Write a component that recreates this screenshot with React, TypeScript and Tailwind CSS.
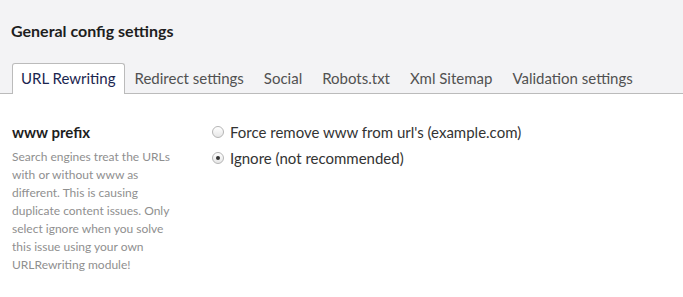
const tabs = [
  "URL Rewriting",
  "Redirect settings",
  "Social",
  "Robots.txt",
  "Xml Sitemap",
  "Validation settings",
];

export default function App() {
  return (
    <div className="min-h-[297px] w-full bg-white font-['Lato',sans-serif]">
      {/* Header with title and tabs */}
      <div className="bg-[#f3f3f5] pt-[20px] border-b border-[#bbbbbb]">
        <h1 className="pl-[11px] text-[16px] font-bold leading-[22px] text-[#1e1e1e]">
          General config settings
        </h1>
        <div className="mt-[21px] flex pl-[12px]">
          {tabs.map((t, i) => (
            <div
              key={t}
              className={
                i === 0
                  ? "-mb-px h-[31px] rounded-t-[3px] border border-b-0 border-[#bbbbbb] bg-white px-[8px] pt-[3px] text-[15px] leading-[22px] text-[#1b264f]"
                  : "h-[30px] border border-transparent px-[9px] pt-[3px] text-[15px] leading-[22px] text-[#515151]"
              }
            >
              {t}
            </div>
          ))}
        </div>
      </div>

      {/* Setting row */}
      <div className="flex pt-[27px]">
        <div className="w-[212px] shrink-0 pl-[12px]">
          <div className="text-[15px] font-bold leading-[22px] text-[#1e1e1e]">www prefix</div>
          <p className="mt-[5px] w-[172px] text-[12px] leading-[18px] text-[#8f8f8f]">
            Search engines treat the URLs with or without www as different. This is causing
            duplicate content issues. Only select ignore when you solve this issue using your own
            URLRewriting module!
          </p>
        </div>
        <div className="flex flex-col gap-[4px] pt-0">
          <label className="flex items-center gap-[6px] text-[15px] leading-[22px] text-[#333333]">
            <span className="h-[12px] w-[12px] rounded-full border border-[#b5b5b5] bg-gradient-to-b from-white to-[#e6e6e6]" />
            Force remove www from url's (example.com)
          </label>
          <label className="flex items-center gap-[6px] text-[15px] leading-[22px] text-[#333333]">
            <span className="flex h-[12px] w-[12px] items-center justify-center rounded-full border border-[#b5b5b5] bg-gradient-to-b from-white to-[#e6e6e6]">
              <span className="h-[4px] w-[4px] rounded-full bg-[#333333]" />
            </span>
            Ignore (not recommended)
          </label>
        </div>
      </div>
    </div>
  );
}
